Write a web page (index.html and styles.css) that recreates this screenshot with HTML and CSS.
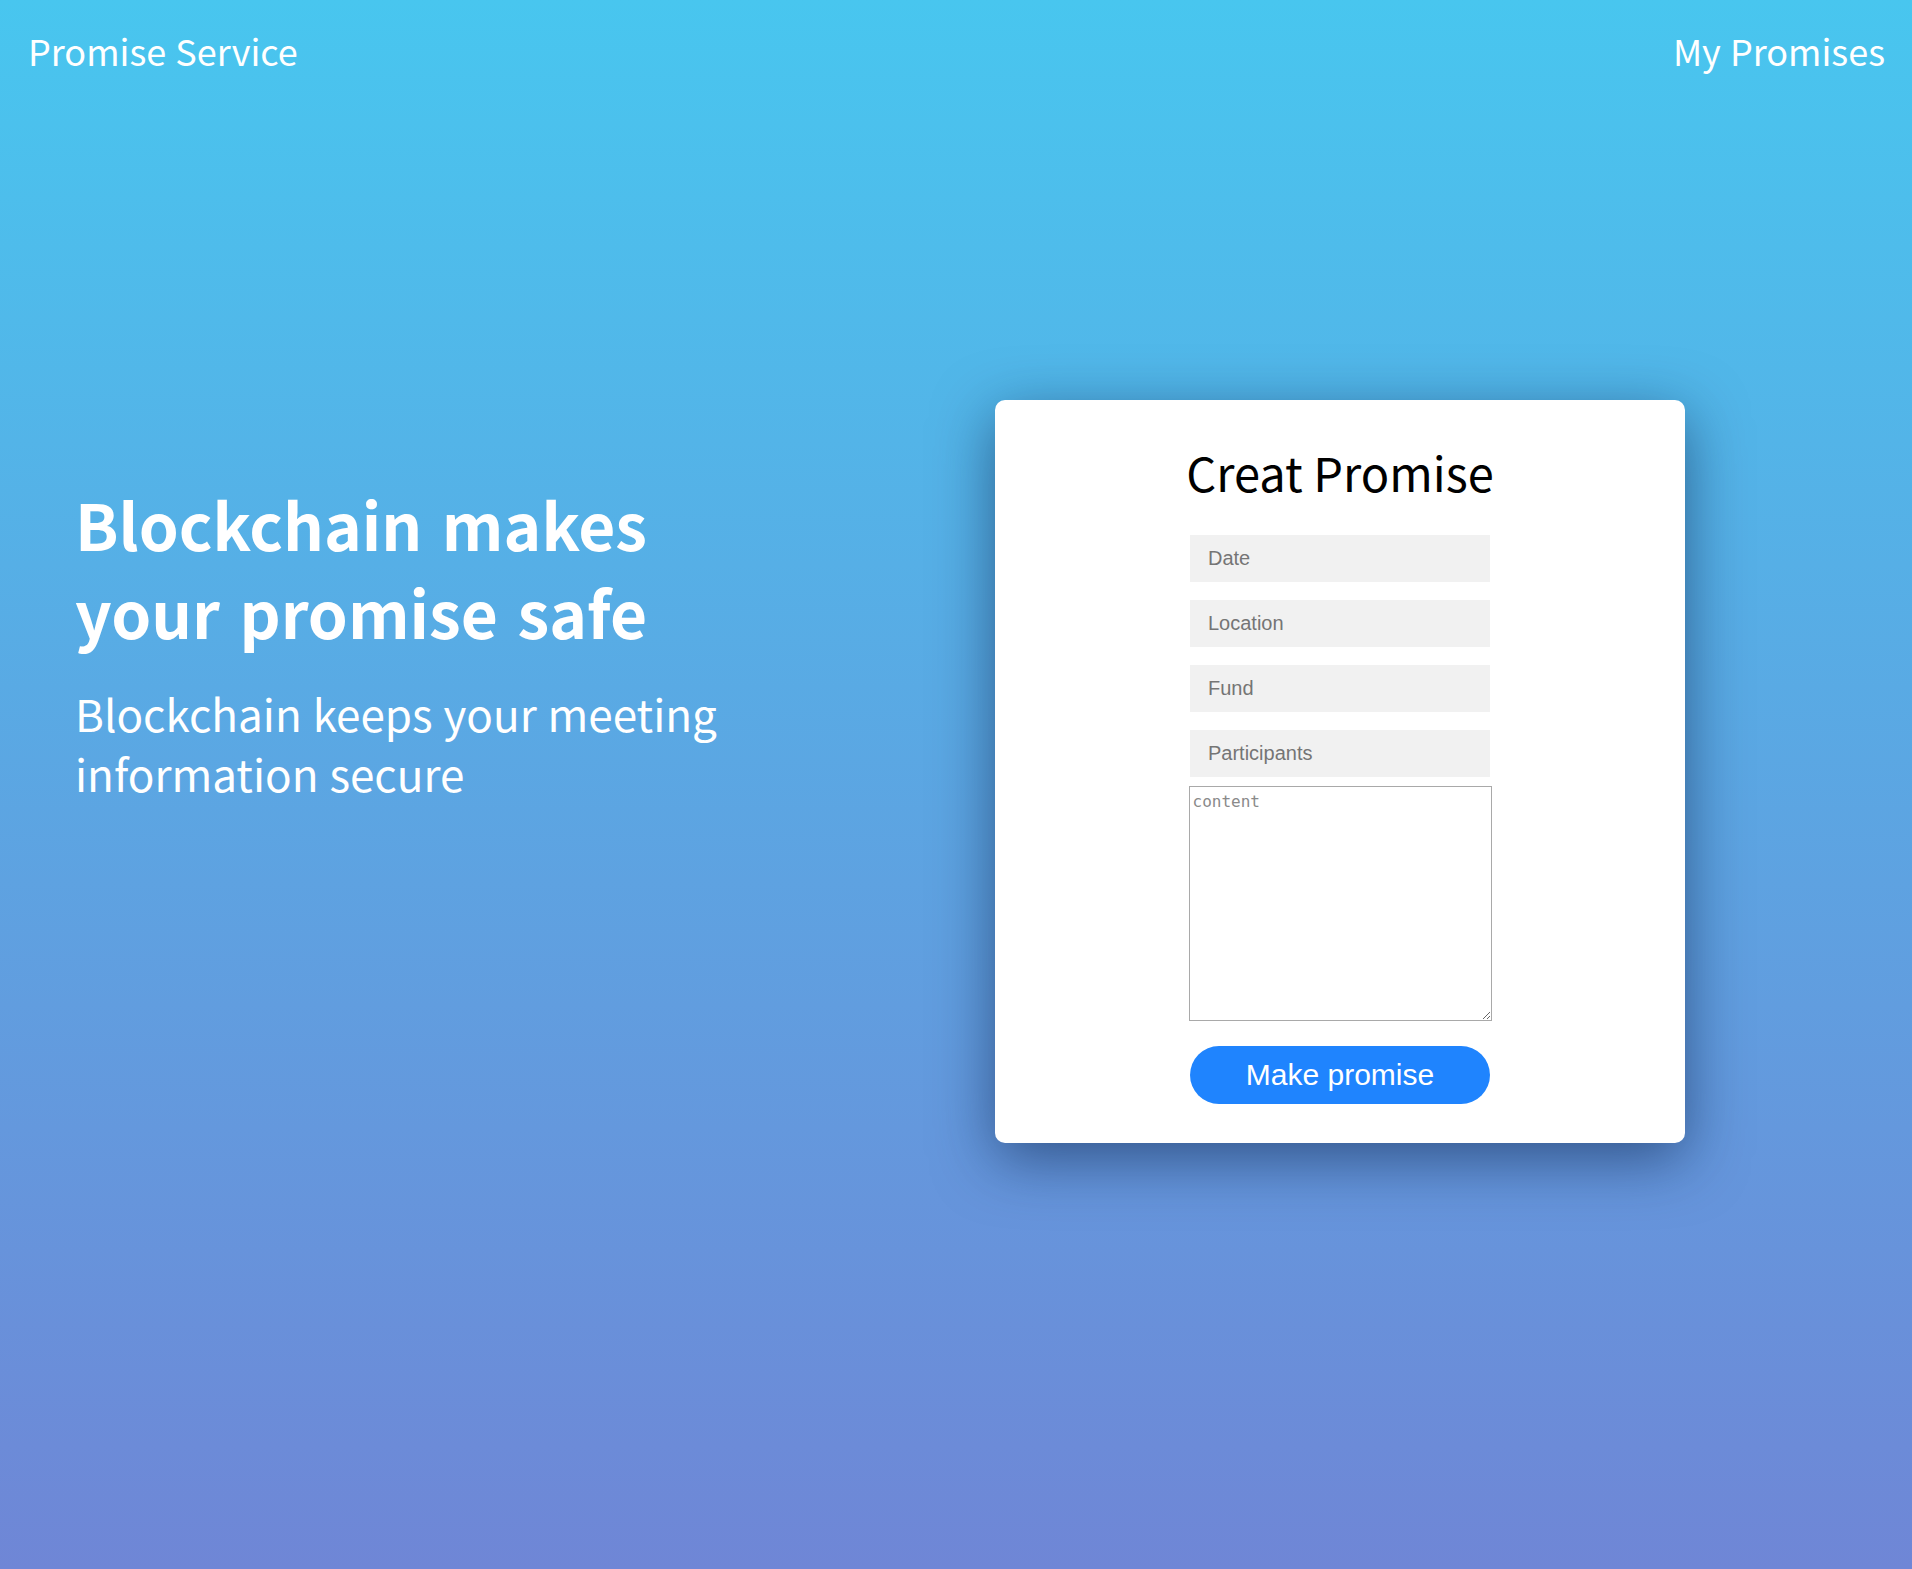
FILE: index.html
```html
<!DOCTYPE html>
<html lang="en">
<head>
<meta charset="utf-8">
<title>Promise Service</title>
<link rel="stylesheet" href="styles.css">
</head>
<body>
<div class="page">
  <header class="topbar">
    <a class="brand" href="#">Promise Service</a>
    <a class="nav-link" href="#">My Promises</a>
  </header>
  <main class="main">
    <section class="hero">
      <h1 class="hero-title">Blockchain makes<br>your promise safe</h1>
      <p class="hero-sub">Blockchain keeps your meeting<br>information secure</p>
    </section>
    <section class="card">
      <h2 class="card-title">Creat Promise</h2>
      <form class="form">
        <input class="field" type="text" placeholder="Date">
        <input class="field" type="text" placeholder="Location">
        <input class="field" type="text" placeholder="Fund">
        <input class="field" type="text" placeholder="Participants">
        <textarea class="content" placeholder="content"></textarea>
        <button class="submit" type="button">Make promise</button>
      </form>
    </section>
  </main>
</div>
</body>
</html>
```

FILE: styles.css
```css
html, body {
  margin: 0;
  padding: 0;
}

body {
  min-height: 1569px;
  background: linear-gradient(to bottom, #48c6ef 0%, #6f86d6 100%);
  font-family: "Noto Sans CJK KR", "Noto Sans", sans-serif;
  color: #fff;
}

.page {
  min-height: 1569px;
}

.topbar {
  display: flex;
  justify-content: space-between;
  align-items: flex-start;
  height: 105px;
  padding: 24px 27px 0 28px;
  box-sizing: border-box;
}

.brand,
.nav-link {
  color: #fff;
  text-decoration: none;
  font-size: 36px;
  line-height: 52px;
  font-weight: 400;
  word-spacing: 1px;
}

.main {
  display: grid;
  grid-template-columns: 1fr 690px;
  padding: 0 227px 0 75px;
  align-items: start;
}

.hero {
  padding-top: 374px;
}

.hero-title {
  margin: 0;
  font-size: 64px;
  line-height: 88px;
  font-weight: 700;
  word-spacing: 5px;
}

.hero-sub {
  margin: 28px 0 0;
  font-size: 44px;
  line-height: 60px;
  font-weight: 400;
  word-spacing: 1px;
}

.card {
  margin-top: 295px;
  background: #fff;
  border-radius: 10px;
  box-shadow: 0 16px 60px rgba(10, 30, 70, 0.55);
  padding: 37px 0 39px;
  display: flex;
  flex-direction: column;
  align-items: center;
  color: #000;
}

.card-title {
  margin: 0 0 28px;
  font-size: 47px;
  line-height: 70px;
  font-weight: 400;
}

.form {
  display: flex;
  flex-direction: column;
  align-items: center;
  width: 303px;
}

.field {
  display: block;
  width: 300px;
  height: 47px;
  box-sizing: border-box;
  margin: 0 0 18px;
  padding: 0 18px;
  border: none;
  background: #f1f1f1;
  font-family: "Liberation Sans", Arial, sans-serif;
  font-size: 20px;
  color: #333;
  outline: none;
}

.field:nth-of-type(4) {
  margin-bottom: 9px;
}

.field::placeholder {
  color: #757575;
}

.content {
  display: block;
  width: 303px;
  height: 235px;
  box-sizing: border-box;
  margin: 0 0 25px;
  padding: 4px 3px;
  border: 1px solid #a9a9a9;
  font-family: "DejaVu Sans Mono", monospace;
  font-size: 16px;
  line-height: 22px;
  resize: both;
}

.content::placeholder {
  color: #8a8a8a;
}

.submit {
  display: block;
  width: 300px;
  height: 58px;
  border: none;
  border-radius: 29px;
  background: #1f84fe;
  color: #fff;
  font-family: "Liberation Sans", Arial, sans-serif;
  font-size: 30px;
  cursor: pointer;
}
```
